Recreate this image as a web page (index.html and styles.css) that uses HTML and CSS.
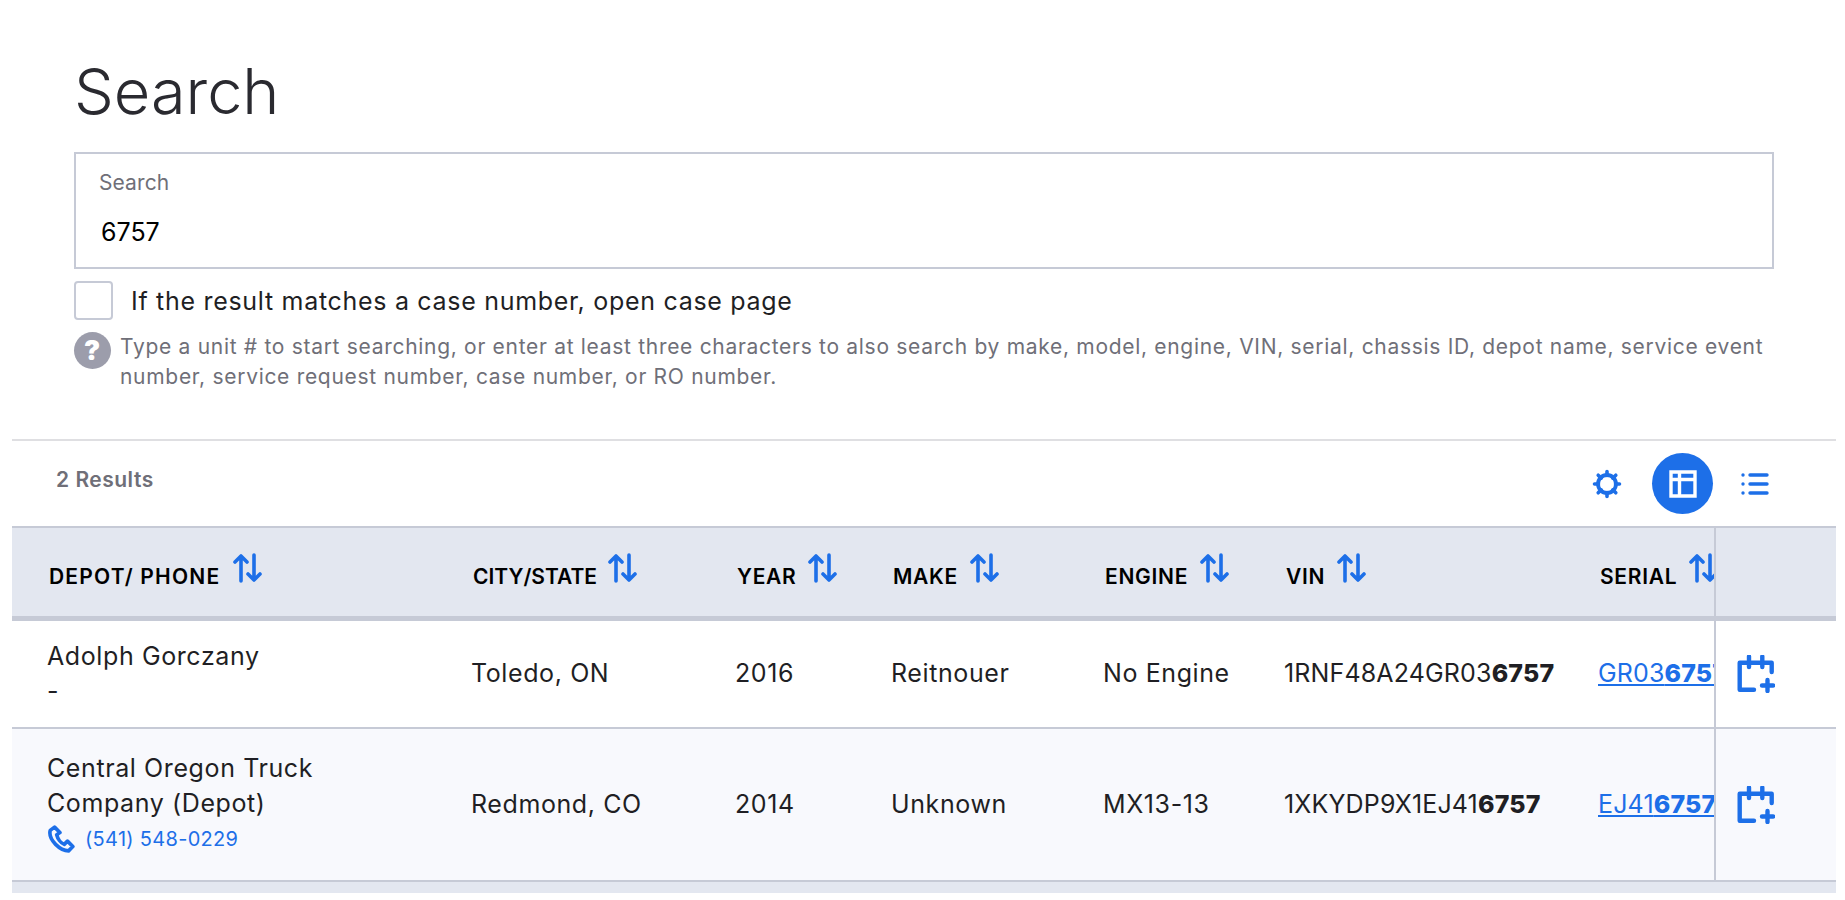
FILE: index.html
```html
<!doctype html>
<html lang="en">
    <head>
        <meta charset="UTF-8" />
        <meta name="viewport" content="width=device-width, initial-scale=1.0" />
        <title>Search</title>
        <link rel="stylesheet" href="styles.css">
    </head>
    <body>
        <svg class="defs" width="0" height="0">
            <symbol id="sort" viewBox="0 0 30 30">
                <path d="M8 28V3M2 9l6-6 6 6M21 2v25M15 21l6 6 6-6" fill="none" stroke="currentColor" stroke-width="3.6" stroke-linecap="round" stroke-linejoin="round"/>
            </symbol>
            <symbol id="cal" viewBox="0 0 38 38">
                <path d="M17 34.700H2.700V7.700h32V17M12 1.500V12M25.300 1.500V12M30.500 25v11M25 30.500h11" fill="none" stroke="currentColor" stroke-width="4.400" stroke-linecap="round" stroke-linejoin="round"/>
            </symbol>
        </svg>

        <div class="top">
            <h1>Search</h1>
            <div class="field">
                <label>Search</label>
                <div class="value">6757</div>
            </div>
            <div class="check">
                <span class="box"></span>
                <span>If the result matches a case number, open case page</span>
            </div>
            <div class="hint">
                <span class="q">?</span>
                <p>Type a unit # to start searching, or enter at least three characters to also search by make, model, engine, VIN, serial, chassis ID, depot name, service event number, service request number, case number, or RO number.</p>
            </div>
        </div>

        <div class="results">
            <div class="bar">
                <span class="count">2 Results</span>
                <div class="tools">
                    <svg class="gear" viewBox="0 0 30 30"><circle cx="15" cy="15" r="9" fill="none" stroke="currentColor" stroke-width="3.8"/><path d="M15 2.500v4M15 23.500v4M2.500 15h4M23.500 15h4M6.200 6.200l3 3M20.800 20.800l3 3M6.200 23.800l3-3M20.800 9.200l3-3" stroke="currentColor" stroke-width="3.6" stroke-linecap="round"/></svg>
                    <span class="round"><svg viewBox="0 0 28 28"><path d="M2 2h24v24H2zM2 9.500h24M10.500 2v24" fill="none" stroke="currentColor" stroke-width="3.400"/></svg></span>
                    <svg class="list" viewBox="0 0 28 24"><path d="M9 3h17M9 12h17M9 21h17" stroke="currentColor" stroke-width="3.400" stroke-linecap="round"/><circle cx="2" cy="3" r="1.700" fill="currentColor"/><circle cx="2" cy="12" r="1.700" fill="currentColor"/><circle cx="2" cy="21" r="1.700" fill="currentColor"/></svg>
                </div>
            </div>

            <table>
                <colgroup>
                    <col class="c1"><col class="c2"><col class="c3"><col class="c4"><col class="c5"><col class="c6"><col class="c7"><col class="c8">
                </colgroup>
                <thead>
                    <tr>
                        <th class="wide">Depot/ Phone <svg class="sort"><use href="#sort"/></svg></th>
                        <th class="tight">City/State <svg class="sort"><use href="#sort"/></svg></th>
                        <th>Year <svg class="sort"><use href="#sort"/></svg></th>
                        <th>Make <svg class="sort"><use href="#sort"/></svg></th>
                        <th>Engine <svg class="sort"><use href="#sort"/></svg></th>
                        <th>VIN <svg class="sort"><use href="#sort"/></svg></th>
                        <th class="clip">Serial <svg class="sort"><use href="#sort"/></svg></th>
                        <th class="action"></th>
                    </tr>
                </thead>
                <tbody>
                    <tr class="r1">
                        <td>Adolph Gorczany<br>-</td>
                        <td>Toledo, ON</td>
                        <td>2016</td>
                        <td>Reitnouer</td>
                        <td>No Engine</td>
                        <td class="code">1RNF48A24GR03<b>6757</b></td>
                        <td class="code clip"><a href="#">GR03<b>6757</b></a></td>
                        <td class="action"><svg class="cal"><use href="#cal"/></svg></td>
                    </tr>
                    <tr class="r2">
                        <td class="depot">Central Oregon Truck<br>Company (Depot)
                            <div class="phone">
                                <svg viewBox="0 0 26 26"><path d="M7 2 3 5c-1 4 1 9 5 13s8 6 12 6l4-4-5-5-3 3c-3-1-6-5-7-9l3-2z" fill="none" stroke="currentColor" stroke-width="3.400" stroke-linejoin="round"/></svg>
                                <a href="#">(541) 548-0229</a>
                            </div>
                        </td>
                        <td>Redmond, CO</td>
                        <td>2014</td>
                        <td>Unknown</td>
                        <td>MX13-13</td>
                        <td class="code">1XKYDP9X1EJ41<b>6757</b></td>
                        <td class="code clip"><a href="#">EJ41<b>6757</b></a></td>
                        <td class="action"><svg class="cal"><use href="#cal"/></svg></td>
                    </tr>
                </tbody>
            </table>
            <div class="foot"></div>
        </div>
    </body>
</html>
```
FILE: styles.css
```css
* {
    margin: 0;
    padding: 0;
    box-sizing: border-box;
}
body {
    background: #fff;
    color: #1f1f24;
    font-family: Inter, "Open Sans", sans-serif;
    padding: 0 9px 0 12px;
}
.defs {
    position: absolute;
}

.top {
    padding: 55px 62px 0 62px;
    height: 439px;
}
h1 {
    font-size: 63px;
    font-weight: 300;
    line-height: 72px;
    color: #2a2a30;
    margin-bottom: 25px;
}
.field {
    height: 117px;
    border: 2px solid #c6cad6;
    padding: 16px 23px;
}
.field label {
    display: block;
    font-size: 21px;
    letter-spacing: 0.1px;
    line-height: 26px;
    color: #6f6f78;
}
.field .value {
    font-size: 25px;
    line-height: 32px;
    margin-top: 20px;
    margin-left: 2px;
    color: #000;
}
.check {
    display: flex;
    align-items: center;
    gap: 18px;
    margin-top: 12px;
    font-size: 25px;
    letter-spacing: 0.7px;
    line-height: 38px;
}
.box {
    width: 39px;
    height: 39px;
    border: 2px solid #c6cad6;
    border-radius: 4px;
}
.hint {
    display: flex;
    gap: 9px;
    margin-top: 12px;
    font-size: 21px;
    letter-spacing: 0.7px;
    line-height: 30px;
    color: #6f6f78;
}
.q {
    flex: none;
    width: 37px;
    height: 37px;
    border-radius: 50%;
    background: #9c9dab;
    color: #fff;
    font-size: 27px;
    font-weight: 900;
    line-height: 37px;
    text-align: center;
}

.results {
    border-top: 2px solid #dfdfe2;
}
.bar {
    height: 85px;
    display: flex;
    justify-content: space-between;
    align-items: center;
    padding: 0 67px 0 44px;
}
.count {
    font-size: 21px;
    font-weight: 600;
    letter-spacing: 0.5px;
    color: #6f6f78;
    margin-bottom: 9px;
}
.tools {
    display: flex;
    align-items: center;
    color: #1d6fe8;
}
.gear {
    width: 30px;
    height: 30px;
}
.round {
    display: grid;
    place-items: center;
    width: 61px;
    height: 61px;
    margin-left: 30px;
    margin-right: 28px;
    border-radius: 50%;
    background: #1d6fe8;
    color: #fff;
}
.round svg {
    width: 28px;
    height: 28px;
}
.list {
    width: 28px;
    height: 24px;
}

table {
    width: 1824px;
    table-layout: fixed;
    border-collapse: collapse;
    font-size: 25px;
    letter-spacing: 0.6px;
    line-height: 35px;
}
.c1 { width: 424px; }
.c2 { width: 264px; }
.c3 { width: 156px; }
.c4 { width: 212px; }
.c5 { width: 181px; }
.c6 { width: 314px; }
.c7 { width: 152px; }
.c8 { width: 121px; }

th {
    height: 91px;
    background: #e3e7f0;
    border-top: 2px solid #c6cad6;
    border-bottom: 5px solid #c6cad6;
    padding: 4px 0 0 37px;
    text-align: left;
    font-size: 21px;
    font-weight: 600;
    letter-spacing: 0.7px;
    text-transform: uppercase;
    color: #000;
    white-space: nowrap;
}
th.wide {
    letter-spacing: 1.2px;
}
th.tight {
    letter-spacing: 0;
}
td {
    padding: 0 0 0 35px;
    border-bottom: 2px solid #c6cad6;
    white-space: nowrap;
}
td.code {
    letter-spacing: 0.15px;
}
.r1 td {
    height: 110px;
}
.r2 td {
    height: 153px;
    background: #f8f9fd;
}
.r2 td.depot {
    padding-bottom: 4px;
}
td b {
    font-weight: 800;
}
td a {
    color: #1d6fe8;
}
.clip {
    overflow: hidden;
}
.action {
    border-left: 2px solid #c6cad6;
    padding: 0 0 0 21px;
    color: #1d6fe8;
}
.cal {
    display: block;
    width: 38px;
    height: 38px;
}
.sort {
    width: 30px;
    height: 30px;
    margin-left: 6px;
    color: #1d6fe8;
    vertical-align: 1px;
}
.phone {
    display: flex;
    align-items: center;
    gap: 10px;
    font-size: 20px;
    letter-spacing: 0.3px;
    line-height: 30px;
    margin-top: 3px;
}
.phone svg {
    width: 28px;
    height: 28px;
    color: #1d6fe8;
}
.phone a {
    text-decoration: none;
}
.foot {
    height: 11px;
    background: #e3e7f0;
}
```
